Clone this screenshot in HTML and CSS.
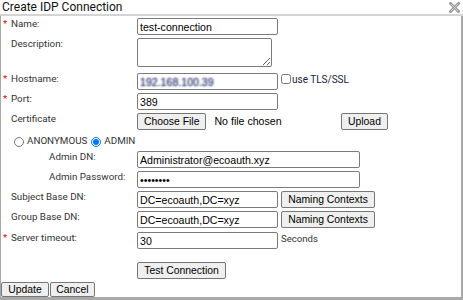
FILE: index.html
```html
<!DOCTYPE html>
<html lang="en">
<head>
<meta charset="utf-8">
<title>Create IDP Connection</title>
<link rel="stylesheet" href="styles.css">
</head>
<body>
<div class="dialog">
  <div class="titlebar">
    <span class="title">Create IDP Connection</span>
    <svg class="close" width="11" height="11" viewBox="0 0 11 11" aria-label="Close">
      <path d="M1.5 1.5 L9.5 9.5 M9.5 1.5 L1.5 9.5" stroke="#9c9c9c" stroke-width="3" stroke-linecap="square"/>
      <path d="M2 2 L9 9 M9 2 L2 9" stroke="#cfcfcf" stroke-width="1"/>
    </svg>
  </div>
  <form class="body">
    <div class="row">
      <label class="lbl"><span class="req">*</span>Name:</label>
      <input class="txt" type="text" value="test-connection">
    </div>
    <div class="row r-desc">
      <label class="lbl">Description:</label>
      <textarea class="area"></textarea>
    </div>
    <div class="row">
      <label class="lbl"><span class="req">*</span>Hostname:</label>
      <input class="txt host" type="text" value="192.168.100.39">
      <input class="chk" type="checkbox">
      <span class="chk-lbl">use TLS/SSL</span>
    </div>
    <div class="row">
      <label class="lbl"><span class="req">*</span>Port:</label>
      <input class="txt" type="text" value="389">
    </div>
    <div class="row r-cert">
      <label class="lbl">Certificate</label>
      <div class="file">
        <button type="button" class="btn">Choose File</button>
        <span class="nofile">No file chosen</span>
      </div>
      <button type="button" class="btn">Upload</button>
    </div>
    <div class="row r-radio">
      <input class="rad" type="radio" name="auth">
      <span class="rad-lbl">ANONYMOUS</span>
      <input class="rad rad2" type="radio" name="auth" checked>
      <span class="rad-lbl">ADMIN</span>
    </div>
    <div class="row sub">
      <label class="lbl">Admin DN:</label>
      <input class="txt wide" type="text" value="Administrator@ecoauth.xyz">
    </div>
    <div class="row sub">
      <label class="lbl">Admin Password:</label>
      <input class="txt wide" type="password" value="password">
    </div>
    <div class="row">
      <label class="lbl">Subject Base DN:</label>
      <input class="txt" type="text" value="DC=ecoauth,DC=xyz">
      <button type="button" class="btn side">Naming Contexts</button>
    </div>
    <div class="row r-group">
      <label class="lbl">Group Base DN:</label>
      <input class="txt" type="text" value="DC=ecoauth,DC=xyz">
      <button type="button" class="btn side">Naming Contexts</button>
    </div>
    <div class="row r-timeout">
      <label class="lbl"><span class="req">*</span>Server timeout:</label>
      <input class="txt" type="text" value="30">
      <span class="unit">Seconds</span>
    </div>
    <div class="row">
      <button type="button" class="btn test">Test Connection</button>
    </div>
    <div class="foot">
      <button type="button" class="btn fbtn">Update</button>
      <button type="button" class="btn fbtn">Cancel</button>
    </div>
  </form>
</div>
</body>
</html>
```
FILE: styles.css
```css
* { box-sizing: border-box; }

body {
  margin: 0;
  background: #fff;
  font-family: Roboto, "Liberation Sans", Arial, sans-serif;
}

.dialog {
  width: 463px;
  height: 300px;
  display: flex;
  flex-direction: column;
}

.titlebar {
  height: 16px;
  flex-shrink: 0;
  border-bottom: 2px solid #d4d4d4;
  display: flex;
  justify-content: space-between;
  align-items: flex-start;
  padding: 0 3px 0 2px;
}

.title {
  font-size: 12px;
  line-height: 14px;
  color: #111;
}

.close { margin-top: 2px; }

.body {
  flex: 1;
  margin: 0;
  border: solid #a9a9a9;
  border-width: 0 2px 3px 1px;
  padding-top: 2px;
  display: flex;
  flex-direction: column;
}

.row {
  display: flex;
  align-items: flex-start;
  height: 20px;
  flex-shrink: 0;
}

.r-desc { height: 35px; }
.r-cert { height: 22px; }
.r-radio { height: 16px; padding-left: 13px; }
.r-group { height: 21px; }
.r-timeout { height: 30px; }

.lbl {
  width: 136px;
  flex-shrink: 0;
  padding-left: 10px;
  font-size: 9.8px;
  line-height: 12px;
  color: #333;
}

.sub .lbl { padding-left: 48px; }

.req {
  display: inline-block;
  width: 8px;
  margin-left: -8px;
  color: #cc1111;
}

.txt {
  width: 141px;
  height: 17px;
  margin: 0;
  padding: 0 2px;
  border: 1px solid #7b7b7b;
  border-radius: 2px;
  background: #fff;
  color: #000;
  font: 10.6px "Liberation Sans", Arial, sans-serif;
  outline: none;
}

.wide { width: 223px; }

.host {
  color: transparent;
  text-shadow: 0 0 2px rgba(60, 70, 120, 1), 0 0 2px rgba(120, 130, 160, 0.8);
}

.area {
  width: 135px;
  height: 29px;
  margin: 0;
  padding: 1px 2px;
  border: 1px solid #7b7b7b;
  border-radius: 2px;
  font: 10.6px "Liberation Sans", Arial, sans-serif;
  resize: both;
}

.chk {
  width: 10px;
  height: 10px;
  margin: 1px 1px 0 3px;
}

.chk-lbl {
  font-size: 10px;
  line-height: 12px;
  color: #20203c;
  padding-top: 1px;
}

.btn {
  height: 17px;
  margin: 0;
  padding: 0 6px;
  border: 1px solid #767676;
  border-radius: 2px;
  background: #efefef;
  color: #000;
  font: 10.4px "Liberation Sans", Arial, sans-serif;
  white-space: nowrap;
}

.file {
  width: 204px;
  display: flex;
  align-items: center;
  flex-shrink: 0;
}

.nofile {
  margin-left: 8px;
  font: 10.6px "Liberation Sans", Arial, sans-serif;
  line-height: 17px;
  color: #000;
}

.rad {
  width: 10px;
  height: 10px;
  margin: 2px 3px 0 0;
}

.rad2 { margin-left: 4px; }

.rad-lbl {
  font-size: 9.8px;
  line-height: 12px;
  color: #333;
}

.side { margin-left: 3px; width: 94px; padding: 0; }

.unit {
  margin-left: 3px;
  padding-top: 1px;
  font-size: 9.6px;
  line-height: 12px;
  color: #333;
}

.test { margin-left: 136px; width: 89px; padding: 0; }

.foot {
  display: flex;
  gap: 1px;
  height: 15px;
  flex-shrink: 0;
}

.fbtn { height: 15px; }
.fbtn:first-child { width: 48px; padding: 0; }
.fbtn:last-child { width: 45px; padding: 0; }
```
